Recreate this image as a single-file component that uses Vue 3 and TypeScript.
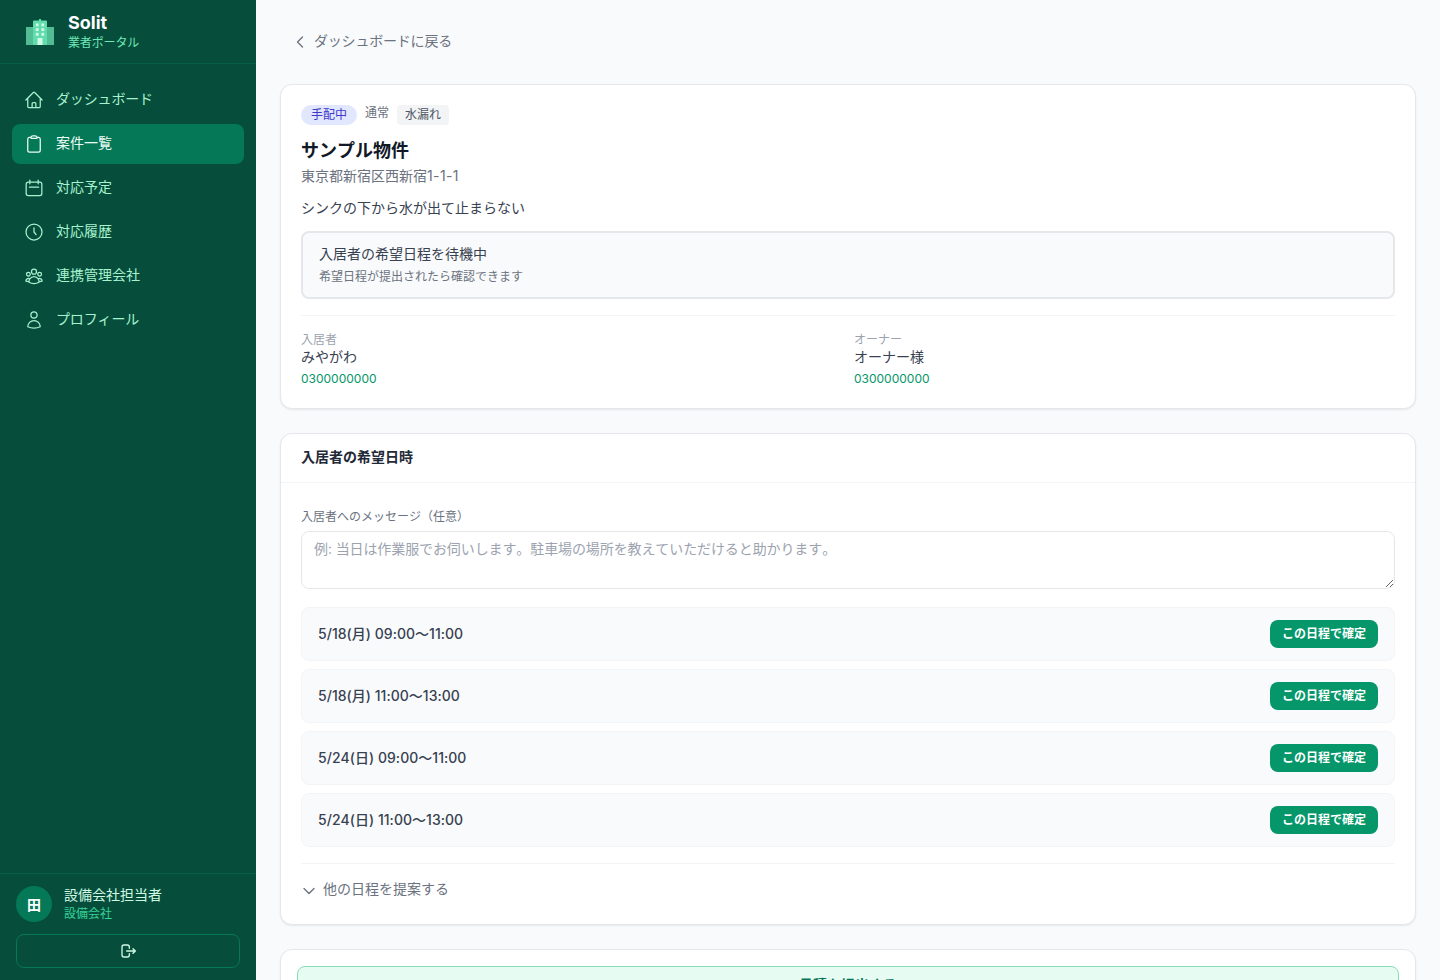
<script setup lang="ts">
interface NavItem { label: string; icon: string[]; active?: boolean; kana?: boolean }
const nav: NavItem[] = [
  { label: 'ダッシュボード', kana: true, icon: ['M2.25 12l8.954-8.955c.44-.439 1.152-.439 1.591 0L21.75 12M4.5 9.75v10.125c0 .621.504 1.125 1.125 1.125H9.75v-4.875c0-.621.504-1.125 1.125-1.125h2.25c.621 0 1.125.504 1.125 1.125V21h4.125c.621 0 1.125-.504 1.125-1.125V9.75M8.25 21h8.25'] },
  { label: '案件一覧', active: true, icon: ['M15.666 3.888A2.25 2.25 0 0013.5 2.25h-3c-1.03 0-1.9.693-2.166 1.638m7.332 0c.055.194.084.4.084.612v0a.75.75 0 01-.75.75H9a.75.75 0 01-.75-.75v0c0-.212.03-.418.084-.612m7.332 0c.646.049 1.288.11 1.927.184 1.1.128 1.907 1.077 1.907 2.185V19.5a2.25 2.25 0 01-2.25 2.25H6.75A2.25 2.25 0 014.5 19.5V6.257c0-1.108.806-2.057 1.907-2.185a48.208 48.208 0 011.927-.184'] },
  { label: '対応予定', icon: ['M7 2.6V7M17 2.6V7M5 5h14a2.4 2.4 0 012.4 2.4v11.2A2.4 2.4 0 0119 21H5a2.4 2.4 0 01-2.4-2.4V7.4A2.4 2.4 0 015 5z', 'M6.5 11h11'] },
  { label: '対応履歴', icon: ['M12 7v5l2.5 3.2', 'M21.6 12a9.6 9.6 0 11-19.2 0 9.6 9.6 0 0119.2 0z'] },
  { label: '連携管理会社', icon: ['M18 18.72a9.094 9.094 0 003.741-.479 3 3 0 00-4.682-2.72m.94 3.198l.001.031c0 .225-.012.447-.037.666A11.944 11.944 0 0112 21c-2.17 0-4.207-.576-5.963-1.584A6.062 6.062 0 016 18.719m12 0a5.971 5.971 0 00-.941-3.197m0 0A5.995 5.995 0 0012 12.75a5.995 5.995 0 00-5.058 2.772m0 0a3 3 0 00-4.681 2.72 8.986 8.986 0 003.74.477m.94-3.197a5.971 5.971 0 00-.94 3.197M15 6.75a3 3 0 11-6 0 3 3 0 016 0zm6 3a2.25 2.25 0 11-4.5 0 2.25 2.25 0 014.5 0zm-13.5 0a2.25 2.25 0 11-4.5 0 2.25 2.25 0 014.5 0z'] },
  { label: 'プロフィール', kana: true, icon: ['M15.75 6a3.75 3.75 0 11-7.5 0 3.75 3.75 0 017.5 0zM4.501 20.118a7.5 7.5 0 0114.998 0A17.933 17.933 0 0112 21.75c-2.676 0-5.216-.584-7.499-1.632z'] },
]
const slots: string[] = ['5/18(月) 09:00〜11:00', '5/18(月) 11:00〜13:00', '5/24(日) 09:00〜11:00', '5/24(日) 11:00〜13:00']
</script>

<template>
  <div class="app">
    <aside class="sidebar">
      <div class="brand">
        <svg class="logo" viewBox="0 0 28 26" width="28" height="26">
          <rect x="0" y="8" width="28" height="18" fill="#52bd94" />
          <rect x="7" y="1.5" width="14" height="24.5" rx="1" fill="#62dcae" />
          <rect x="13" y="0" width="2" height="2" fill="#62dcae" />
          <g fill="#d1fae5">
            <rect x="9.8" y="4.5" width="2.8" height="2.8" /><rect x="15.4" y="4.5" width="2.8" height="2.8" />
            <rect x="9.8" y="9.2" width="2.8" height="2.8" /><rect x="15.4" y="9.2" width="2.8" height="2.8" />
            <rect x="9.8" y="13.9" width="2.8" height="2.8" /><rect x="15.4" y="13.9" width="2.8" height="2.8" />
            <rect x="11.5" y="19" width="5" height="7" />
          </g>
        </svg>
        <div class="brand-text">
          <div class="brand-name">Solit</div>
          <div class="brand-sub">業者ポータル</div>
        </div>
      </div>
      <nav class="nav">
        <a v-for="item in nav" :key="item.label" class="nav-item" :class="{ active: item.active }">
          <svg viewBox="0 0 24 24" width="20" height="20" fill="none" stroke="currentColor" stroke-width="1.5" stroke-linecap="round" stroke-linejoin="round">
            <path v-for="d in item.icon" :key="d" :d="d" />
          </svg>
          <span class="nav-label" :class="{ kana: item.kana }">{{ item.label }}</span>
        </a>
      </nav>
      <div class="side-foot">
        <div class="user">
          <div class="avatar">田</div>
          <div class="user-text">
            <div class="user-name">設備会社担当者</div>
            <div class="user-co">設備会社</div>
          </div>
        </div>
        <button class="logout" type="button">
          <svg viewBox="0 0 24 24" width="16" height="16" fill="none" stroke="currentColor" stroke-width="2" stroke-linecap="round" stroke-linejoin="round">
            <path d="M14 8V6a3 3 0 00-3-3H6a3 3 0 00-3 3v12a3 3 0 003 3h5a3 3 0 003-3v-2M10 12h13M19.5 8.5L23 12l-3.5 3.5" />
          </svg>
        </button>
      </div>
    </aside>

    <main class="main">
      <a class="back">
        <svg viewBox="0 0 24 24" width="16" height="16" fill="none" stroke="currentColor" stroke-width="2" stroke-linecap="round" stroke-linejoin="round"><path d="M15.75 19.5L8.25 12l7.5-7.5" /></svg>
        <span class="back-label">ダッシュボードに戻る</span>
      </a>

      <section class="card info">
        <div class="badges">
          <span class="badge status">手配中</span>
          <span class="priority">通常</span>
          <span class="badge kind">水漏れ</span>
        </div>
        <h1 class="title">サンプル物件</h1>
        <p class="address">東京都新宿区西新宿<span class="num">1-1-1</span></p>
        <p class="desc">シンクの下から水が出て止まらない</p>
        <div class="notice">
          <p class="notice-main">入居者の希望日程を待機中</p>
          <p class="notice-sub">希望日程が提出されたら確認できます</p>
        </div>
        <div class="contacts">
          <div>
            <p class="c-label">入居者</p>
            <p class="c-name">みやがわ</p>
            <p class="c-tel">0300000000</p>
          </div>
          <div>
            <p class="c-label">オーナー</p>
            <p class="c-name">オーナー様</p>
            <p class="c-tel">0300000000</p>
          </div>
        </div>
      </section>

      <section class="card">
        <h2 class="card-head"><span class="head-label">入居者の希望日時</span></h2>
        <div class="card-body">
          <label class="field-label">入居者へのメッセージ（任意）</label>
          <textarea class="message" rows="2" placeholder="例: 当日は作業服でお伺いします。駐車場の場所を教えていただけると助かります。"></textarea>
          <div class="slots">
            <div v-for="s in slots" :key="s" class="slot">
              <span class="slot-text">{{ s }}</span>
              <button class="confirm" type="button">この日程で確定</button>
            </div>
          </div>
          <div class="propose">
            <svg viewBox="0 0 24 24" width="16" height="16" fill="none" stroke="currentColor" stroke-width="2" stroke-linecap="round" stroke-linejoin="round"><path d="M19.5 8.25l-7.5 7.5-7.5-7.5" /></svg>
            <span class="propose-label">他の日程を提案する</span>
          </div>
        </div>
      </section>

      <section class="card submit-card">
        <button class="submit" type="button">見積を提出する</button>
      </section>
    </main>
  </div>
</template>

<style>
html, body { margin: 0; height: 100%; overflow: hidden; }
</style>

<style scoped>
* { box-sizing: border-box; }
p, h1, h2 { margin: 0; }
.app {
  display: flex;
  height: 980px;
  overflow: hidden;
  background: #f9fafb;
  font-family: Inter, "Noto Sans CJK JP", sans-serif;
  font-kerning: none;
  color: #111827;
}
.sidebar {
  width: 256px;
  flex: none;
  height: 980px;
  display: flex;
  flex-direction: column;
  background: #064e3b;
}
.brand {
  height: 64px;
  display: flex;
  align-items: center;
  gap: 14px;
  padding: 0 24px 0 26px;
  border-bottom: 1px solid #065f46;
}
.logo { flex: none; }
.brand-text { padding-bottom: 2px; }
.brand-name { font-size: 18px; line-height: 24px; font-weight: 700; color: #fff; }
.brand-sub { font-size: 12px; line-height: 16px; letter-spacing: -0.15px; color: #6ee7b7; }
.nav {
  flex: 1;
  display: flex;
  flex-direction: column;
  gap: 4px;
  padding: 16px 12px;
}
.nav-item {
  height: 40px;
  display: flex;
  align-items: center;
  gap: 12px;
  padding: 0 12px;
  border-radius: 8px;
  font-size: 14px;
  color: #a7f3d0;
}
.nav-label { margin-bottom: 5px; }
.kana { letter-spacing: -0.15px; }
.nav-item.active { background: #047857; color: #ecfdf5; }
.side-foot { padding: 12px 16px 12px; border-top: 1px solid #065f46; }
.user { display: flex; align-items: center; gap: 12px; }
.avatar {
  width: 36px;
  height: 36px;
  flex: none;
  border-radius: 50%;
  background: #047857;
  color: #fff;
  font-size: 14px;
  font-weight: 700;
  display: flex;
  align-items: center;
  justify-content: center;
}
.user-text { height: 36px; padding-top: 1px; }
.user-name { font-size: 14px; line-height: 16px; color: #d1fae5; }
.user-co { margin-top: 3px; font-size: 12px; line-height: 16px; color: #34d399; }
.logout {
  width: 100%;
  height: 34px;
  margin-top: 12px;
  display: flex;
  align-items: center;
  justify-content: center;
  border: 1px solid #047857;
  border-radius: 8px;
  background: transparent;
  color: #d1fae5;
  padding: 0;
}
.main { flex: 1; min-width: 0; padding: 32px 24px 24px; }
.back {
  height: 20px;
  display: flex;
  align-items: center;
  gap: 6px;
  padding-left: 12px;
  margin-bottom: 32px;
  font-size: 14px;
  color: #6b7280;
}
.back-label { margin-bottom: 4px; letter-spacing: -0.2px; }
.card {
  background: #fff;
  border: 1px solid #e5e7eb;
  border-radius: 12px;
  box-shadow: 0 1px 2px rgba(0, 0, 0, 0.08);
  margin-bottom: 24px;
}
.info { padding: 20px 20px 21px; }
.badges { display: flex; align-items: flex-start; gap: 8px; height: 20px; }
.badge { font-size: 12px; line-height: 20px; height: 20px; }
.status { padding: 0 10px; border-radius: 999px; background: #e0e7ff; color: #4338ca; }
.priority { font-size: 12px; line-height: 16px; color: #6b7280; }
.kind { padding: 0 8px; border-radius: 4px; background: #f3f4f6; color: #4b5563; }
.title { margin-top: 14px; font-size: 18px; line-height: 24px; font-weight: 700; color: #111827; }
.address { margin-top: 3px; font-size: 14px; line-height: 20px; color: #6b7280; }
.num { letter-spacing: 0.4px; }
.desc { margin-top: 12px; font-size: 14px; line-height: 20px; color: #374151; }
.notice {
  margin-top: 13px;
  height: 68px;
  padding: 11px 16px;
  border: 2px solid #e5e7eb;
  border-radius: 8px;
  background: #f9fafb;
}
.notice-main { font-size: 14px; line-height: 20px; color: #374151; }
.notice-sub { margin-top: 5px; font-size: 12px; line-height: 16px; color: #6b7280; }
.contacts {
  margin-top: 16px;
  padding-top: 16px;
  border-top: 1px solid #f3f4f6;
  display: grid;
  grid-template-columns: 1fr 1fr;
  gap: 12px;
}
.c-label { font-size: 12px; line-height: 15px; color: #9ca3af; }
.c-name { font-size: 14px; line-height: 20px; color: #374151; }
.c-tel { margin-top: 4px; font-size: 12px; line-height: 16px; color: #059669; }
.card-head {
  height: 49px;
  padding: 0 20px;
  display: flex;
  align-items: center;
  border-bottom: 1px solid #f3f4f6;
  font-size: 14px;
  font-weight: 700;
  color: #1f2937;
}
.head-label { margin-bottom: 4px; }
.card-body { padding: 26px 20px 22px; }
.field-label { display: block; font-size: 12px; line-height: 16px; color: #6b7280; margin-bottom: 6px; }
.message {
  display: block;
  width: 100%;
  height: 58px;
  padding: 7px 12px;
  border: 1px solid #e5e7eb;
  border-radius: 8px;
  font: inherit;
  font-size: 14px;
  line-height: 20px;
  letter-spacing: -0.1px;
  color: #111827;
  background: #fff;
  outline: none;
}
.message::placeholder { color: #9ca3af; }
.slots { margin-top: 18px; display: flex; flex-direction: column; gap: 8px; }
.slot {
  height: 54px;
  display: flex;
  align-items: center;
  justify-content: space-between;
  padding: 0 16px;
  border: 1px solid #f3f4f6;
  border-radius: 8px;
  background: #f9fafb;
}
.slot-text { margin-bottom: 2px; font-size: 14px; font-weight: 500; letter-spacing: 0.03px; color: #374151; }
.confirm {
  height: 28px;
  padding: 0 12px 4px;
  border: none;
  border-radius: 8px;
  background: #059669;
  color: #fff;
  font: inherit;
  font-size: 12px;
  font-weight: 700;
}
.propose {
  margin-top: 16px;
  padding-top: 15px;
  border-top: 1px solid #f3f4f6;
  display: flex;
  align-items: center;
  gap: 6px;
  font-size: 14px;
  line-height: 20px;
  color: #6b7280;
}
.propose-label { margin-bottom: 3px; }
.submit-card { padding: 16px; }
.submit {
  width: 100%;
  height: 44px;
  padding: 0 0 9px;
  border: 1px solid #86dcb8;
  border-radius: 8px;
  background: #e6fbf2;
  color: #047857;
  font: inherit;
  font-size: 14px;
  font-weight: 700;
}
</style>
